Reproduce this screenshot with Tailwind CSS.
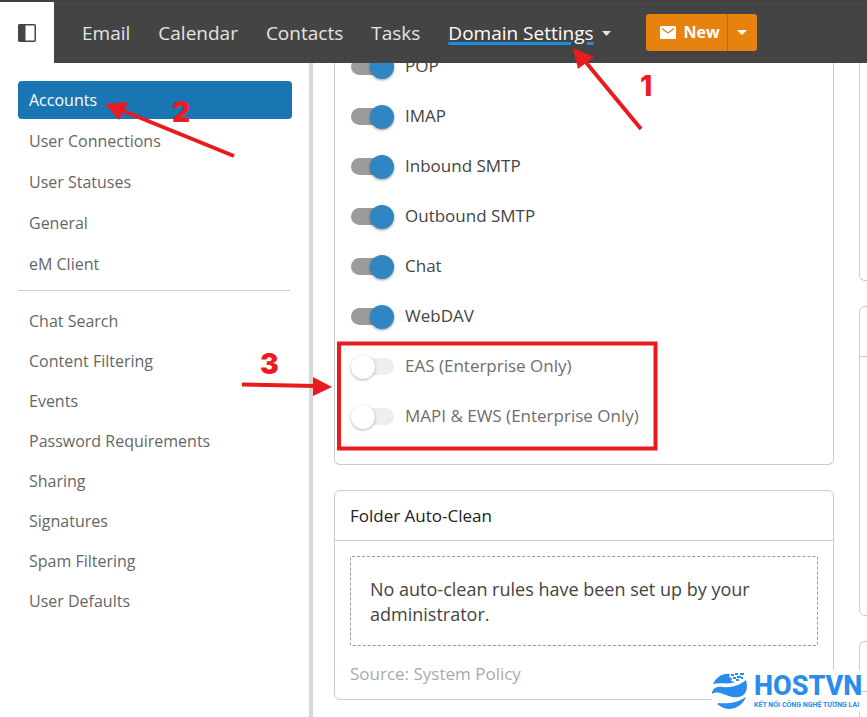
<!DOCTYPE html>
<html lang="en">
<head>
    <meta charset="UTF-8">
    <meta name="viewport" content="width=device-width, initial-scale=1.0">
    <title>Domain Settings - Accounts</title>
    <script src="https://cdn.jsdelivr.net/npm/@tailwindcss/browser@4"></script>
</head>
<body class="relative flex flex-col h-screen overflow-hidden bg-white font-['Open_Sans',sans-serif] text-[17px] text-[#444]">
    <!-- Top bar -->
    <header class="relative z-10 flex shrink-0 h-[63px] border-t border-[#3c4238] bg-[#444]">
        <button class="flex items-center justify-center w-[54px] mt-px bg-white" type="button" aria-label="Toggle sidebar">
            <svg class="w-[18px] h-[18px]" viewBox="0 0 18 18">
                <rect x="0.75" y="0.75" width="16.5" height="16.5" rx="1" fill="none" stroke="#444" stroke-width="1.5"/>
                <rect x="0.5" y="0.5" width="7" height="17" fill="#444"/>
            </svg>
        </button>
        <nav class="flex items-center gap-7 pt-[2px] ml-7 text-[19px] text-[#e4e4e4] whitespace-nowrap">
            <a href="#">Email</a>
            <a href="#">Calendar</a>
            <a href="#">Contacts</a>
            <a href="#">Tasks</a>
            <a class="flex items-center gap-2 text-white" href="#">
                <span class="underline decoration-[#1e8fe0] decoration-3 underline-offset-2">Domain Settings</span>
                <svg class="w-[9px] h-[5px]" viewBox="0 0 9 5"><path d="M0 0h9L4.500 5z" fill="#e4e4e4"/></svg>
            </a>
        </nav>
        <div class="flex self-center h-[37px] ml-[35px] rounded-[3px] overflow-hidden bg-[#e8820f] text-white">
            <button class="flex items-center gap-2 w-[81px] pl-[14px] text-base font-bold" type="button">
                <svg class="w-4 h-[13px] shrink-0" viewBox="0 0 16 13">
                    <rect width="16" height="13" rx="1" fill="#fff"/>
                    <path d="M2 2.500l6 4.500 6-4.500" fill="none" stroke="#e8820f" stroke-width="1.2"/>
                </svg>
                New
            </button>
            <button class="flex items-center justify-center w-[30px] border-l border-[#b9680c]" type="button" aria-label="More new items">
                <svg class="w-[10px] h-[5px]" viewBox="0 0 10 5"><path d="M0 0h10L5 5z" fill="#fff"/></svg>
            </button>
        </div>
    </header>

    <div class="flex flex-1 min-h-0">
        <!-- Sidebar -->
        <aside class="w-[313px] shrink-0 pl-[18px] pr-[17px] pt-[18px] border-r-4 border-[#d8d8d8] text-base leading-[38px] text-[#666]">
            <ul class="flex flex-col gap-[3px]">
                <li><a class="block pl-[11px] rounded bg-[#1976b2] text-white" href="#">Accounts</a></li>
                <li><a class="block pl-[11px]" href="#">User Connections</a></li>
                <li><a class="block pl-[11px]" href="#">User Statuses</a></li>
                <li><a class="block pl-[11px]" href="#">General</a></li>
                <li><a class="block pl-[11px]" href="#">eM Client</a></li>
            </ul>
            <hr class="mt-[7px] mb-[11px] mr-[2px] border-[#ccc]">
            <ul class="flex flex-col gap-[2px]">
                <li><a class="block pl-[11px]" href="#">Chat Search</a></li>
                <li><a class="block pl-[11px]" href="#">Content Filtering</a></li>
                <li><a class="block pl-[11px]" href="#">Events</a></li>
                <li><a class="block pl-[11px]" href="#">Password Requirements</a></li>
                <li><a class="block pl-[11px]" href="#">Sharing</a></li>
                <li><a class="block pl-[11px]" href="#">Signatures</a></li>
                <li><a class="block pl-[11px]" href="#">Spam Filtering</a></li>
                <li><a class="block pl-[11px]" href="#">User Defaults</a></li>
            </ul>
        </aside>

        <!-- Content, scrolled part way down -->
        <main class="flex flex-1 min-w-0 gap-[25px] pl-[21px] -mt-[22px] overflow-hidden">
            <div class="flex flex-col gap-[25px] w-[500px] shrink-0">
                <section class="pl-4 pb-[23px] border border-t-0 border-[#ccc] rounded-b-md">
                    <label class="flex items-center gap-[11px] h-[50px]">
                        <input class="appearance-none relative w-[43px] h-[17px] rounded-full bg-[#9b9b9b] before:absolute before:-top-[3px] before:right-0 before:size-6 before:rounded-full before:bg-[#2f86c3] before:shadow-[0_1px_3px_rgba(0,0,0,0.4)]" type="checkbox" checked>
                        POP
                    </label>
                    <label class="flex items-center gap-[11px] h-[50px]">
                        <input class="appearance-none relative w-[43px] h-[17px] rounded-full bg-[#9b9b9b] before:absolute before:-top-[3px] before:right-0 before:size-6 before:rounded-full before:bg-[#2f86c3] before:shadow-[0_1px_3px_rgba(0,0,0,0.4)]" type="checkbox" checked>
                        IMAP
                    </label>
                    <label class="flex items-center gap-[11px] h-[50px]">
                        <input class="appearance-none relative w-[43px] h-[17px] rounded-full bg-[#9b9b9b] before:absolute before:-top-[3px] before:right-0 before:size-6 before:rounded-full before:bg-[#2f86c3] before:shadow-[0_1px_3px_rgba(0,0,0,0.4)]" type="checkbox" checked>
                        Inbound SMTP
                    </label>
                    <label class="flex items-center gap-[11px] h-[50px]">
                        <input class="appearance-none relative w-[43px] h-[17px] rounded-full bg-[#9b9b9b] before:absolute before:-top-[3px] before:right-0 before:size-6 before:rounded-full before:bg-[#2f86c3] before:shadow-[0_1px_3px_rgba(0,0,0,0.4)]" type="checkbox" checked>
                        Outbound SMTP
                    </label>
                    <label class="flex items-center gap-[11px] h-[50px]">
                        <input class="appearance-none relative w-[43px] h-[17px] rounded-full bg-[#9b9b9b] before:absolute before:-top-[3px] before:right-0 before:size-6 before:rounded-full before:bg-[#2f86c3] before:shadow-[0_1px_3px_rgba(0,0,0,0.4)]" type="checkbox" checked>
                        Chat
                    </label>
                    <label class="flex items-center gap-[11px] h-[50px]">
                        <input class="appearance-none relative w-[43px] h-[17px] rounded-full bg-[#9b9b9b] before:absolute before:-top-[3px] before:right-0 before:size-6 before:rounded-full before:bg-[#2f86c3] before:shadow-[0_1px_3px_rgba(0,0,0,0.4)]" type="checkbox" checked>
                        WebDAV
                    </label>
                    <label class="flex items-center gap-[11px] h-[50px] text-[#6e6e6e]">
                        <input class="appearance-none relative w-[43px] h-[17px] rounded-full bg-[#eee] before:absolute before:-top-[3px] before:left-0 before:size-6 before:rounded-full before:bg-white before:shadow-[0_1px_3px_rgba(0,0,0,0.3)]" type="checkbox" disabled>
                        EAS (Enterprise Only)
                    </label>
                    <label class="flex items-center gap-[11px] h-[50px] text-[#6e6e6e]">
                        <input class="appearance-none relative w-[43px] h-[17px] rounded-full bg-[#eee] before:absolute before:-top-[3px] before:left-0 before:size-6 before:rounded-full before:bg-white before:shadow-[0_1px_3px_rgba(0,0,0,0.3)]" type="checkbox" disabled>
                        MAPI &amp; EWS (Enterprise Only)
                    </label>
                </section>

                <section class="border border-[#ccc] rounded-md">
                    <h2 class="px-[15px] leading-[49px] border-b border-[#ccc] text-[#222]">Folder Auto-Clean</h2>
                    <div class="px-[15px] pt-[15px] pb-[13px]">
                        <p class="px-[19px] pt-5 pb-[18px] border border-dashed border-[#999] rounded-xs text-[18px] leading-[25px]">No auto-clean rules have been set up by your administrator.</p>
                        <p class="mt-4 leading-6 text-[#aaa]">Source: System Policy</p>
                    </div>
                </section>
            </div>

            <div class="flex flex-col gap-[25px] w-[500px] shrink-0">
                <section class="h-[240px] shrink-0 border border-t-0 border-[#ccc] rounded-b-md"></section>
                <section class="h-[310px] shrink-0 border border-[#ccc] rounded-md">
                    <div class="h-[50px] border-b border-[#ccc]"></div>
                </section>
                <section class="h-[310px] shrink-0 border border-[#ccc] rounded-md">
                    <div class="h-[50px] border-b border-[#ccc]"></div>
                </section>
            </div>
        </main>
    </div>

    <!-- Step markers -->
    <svg class="absolute top-0 left-0 z-20 w-[867px] h-[717px] pointer-events-none font-['Inter',sans-serif] text-[28px] font-black" viewBox="0 0 867 717" fill="#e81b1e">
        <g stroke="#e81b1e" stroke-width="4">
            <path d="M584 60L641 129"/>
            <path d="M121 110L234 156"/>
            <path d="M242 384.500L316 386"/>
        </g>
        <path d="M573 48l21 9-16 12z"/>
        <path d="M105 104l23-2-9 18z"/>
        <path d="M332 387l-19-10v19z"/>
        <rect x="339" y="343.500" width="316.500" height="105" fill="none" stroke="#e81b1e" stroke-width="4"/>
        <g fill="#ed1c24">
            <text class="font-extrabold" x="640" y="96">1</text>
            <text x="172" y="122">2</text>
            <text x="260" y="374">3</text>
        </g>
    </svg>

    <!-- Watermark -->
    <div class="absolute right-[5px] bottom-[5px] z-20 flex items-center gap-[7px] w-[150px] h-[42px] bg-white text-[#2a8ceb] font-['Roboto',sans-serif]">
        <svg class="w-[35px] h-[36px] shrink-0" viewBox="0 0 35 36" fill="#2a8ceb">
            <path d="M1 11C4 4 11 0 18 1L17 4 20 5 19 8 23 9C16 12 9 9 1 11z"/>
            <path d="M19 1h3v2h-3zM23 0h3v2h-3zM28 0h4v2h-4zM21 4h3v2h-3zM25 3h4v2h-4zM24 6h3v2h-3zM29 4h2v2h-2z"/>
            <path d="M0 21C0 15 5 13 11 14C20 15 28 12 34 7C36 14 35 20 30 23C23 26 17 23 11 21C6 19 3 19 0 21z"/>
            <path d="M7 30C16 31 25 30 34 24C31 31 26 35 18 36C13 36 9 34 5 31z"/>
        </svg>
        <div class="flex flex-col whitespace-nowrap">
            <span class="text-[27px] leading-[28px] font-extrabold">HOSTVN</span>
            <span class="text-[7px] leading-[10px] font-bold">KẾT NỐI CÔNG NGHỆ TƯƠNG LAI</span>
        </div>
    </div>
</body>
</html>
